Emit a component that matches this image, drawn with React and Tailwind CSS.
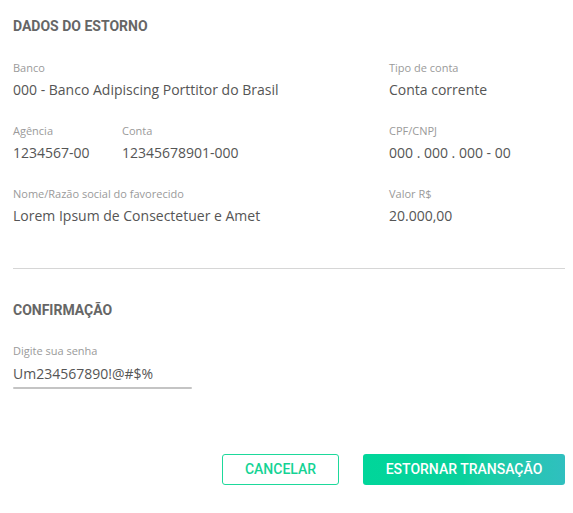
export default function App() {
  const body = { fontFamily: '"Open Sans", "Liberation Sans", sans-serif' };
  const head = { fontFamily: 'Roboto, "Liberation Sans", sans-serif' };

  const Field = ({ label, value, className = "" }) => (
    <div className={className}>
      <p className="text-[11px] leading-[15px] text-[#9a9a9a]">{label}</p>
      <p className="mt-[5px] text-[14px] leading-[20px] text-[#555]">{value}</p>
    </div>
  );

  return (
    <div className="w-[573px] h-[513px] bg-white px-[13px] pt-[17px]" style={body}>
      <h2 className="text-[14px] leading-[18px] font-bold text-[#666]" style={head}>
        DADOS DO ESTORNO
      </h2>

      <div className="mt-[25px] grid grid-cols-[376px_1fr] gap-y-[23px]">
        <Field label="Banco" value="000 - Banco Adipiscing Porttitor do Brasil" />
        <Field label="Tipo de conta" value="Conta corrente" />
        <div className="flex">
          <Field label="Agência" value="1234567-00" className="w-[109px]" />
          <Field label="Conta" value="12345678901-000" />
        </div>
        <Field label="CPF/CNPJ" value="000 . 000 . 000 - 00" />
        <Field label="Nome/Razão social do favorecido" value="Lorem Ipsum de Consectetuer e Amet" />
        <Field label="Valor R$" value="20.000,00" />
      </div>

      <div className="mt-[42px] h-px bg-[#d6d6d6] mr-[-5px]" />

      <h2 className="mt-[32px] text-[14px] leading-[18px] font-bold text-[#666]" style={head}>
        CONFIRMAÇÃO
      </h2>

      <div className="mt-[24px] w-[179px]">
        <p className="text-[11px] leading-[15px] text-[#9a9a9a]">Digite sua senha</p>
        <p className="mt-[6px] text-[14px] leading-[20px] text-[#555]">Um234567890!@#$%</p>
        <div className="mt-[3px] h-[2px] rounded-full bg-[#c4c4c4]" />
      </div>

      <div className="mt-[65px] flex justify-end gap-[24px] mr-[-5px]" style={head}>
        <button className="w-[117px] h-[31px] rounded-[3px] border border-[#1dd99b] text-[#14d394] text-[14px] font-medium">
          CANCELAR
        </button>
        <button className="w-[202px] h-[31px] rounded-[3px] bg-gradient-to-r from-[#00d69a] via-[#09d19c] to-[#30bfbf] text-white text-[14px] font-medium">
          ESTORNAR TRANSAÇÃO
        </button>
      </div>
    </div>
  );
}
